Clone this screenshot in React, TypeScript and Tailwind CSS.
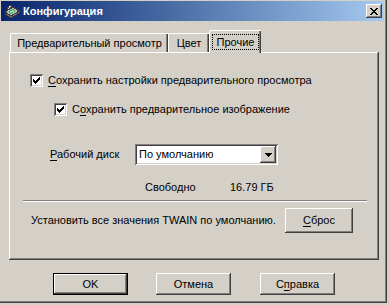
import React from 'react';

const raised =
  'bg-[#d4d0c8] shadow-[inset_-1px_-1px_#404040,inset_1px_1px_#ffffff,inset_-2px_-2px_#808080]';
const sunken =
  'shadow-[inset_1px_1px_#808080,inset_-1px_-1px_#ffffff,inset_2px_2px_#404040,inset_-2px_-2px_#d4d0c8]';

function ScannerIcon() {
  return (
    <svg width="16" height="16" viewBox="0 0 16 16" shapeRendering="crispEdges">
      <path d="M1 9 L9 4 L15 8 L7 13 Z" fill="#c0c0c0" stroke="#404040" strokeWidth="1" />
      <path d="M1 9 L1 11 L7 15 L15 10 L15 8 L7 13 Z" fill="#808080" stroke="#404040" strokeWidth="1" />
      <path d="M4 9 L9 6 L12 8 L7 11 Z" fill="#2f9e5a" />
      <path d="M5 9 L9 7 L11 8 L7 10 Z" fill="#9be39b" />
      <path d="M3 6 L6 2 L8 3 L5 7 Z" fill="#e0e0e0" stroke="#404040" strokeWidth="1" />
    </svg>
  );
}

function Check({ u, rest, pre = '' }: { u: string; rest: string; pre?: string }) {
  return (
    <div className="flex h-[13px] items-center gap-[5px]">
      <div className={`h-[13px] w-[13px] bg-white ${sunken} flex items-center justify-center`}>
        <svg width="7" height="7" viewBox="0 0 7 7" shapeRendering="crispEdges">
          <path
            d="M6 0h1v3h-1zM5 1h1v3h-1zM4 2h1v3h-1zM3 3h1v3h-1zM2 4h1v3h-1zM1 3h1v3h-1zM0 2h1v3h-1z"
            fill="#000"
          />
        </svg>
      </div>
      <span className="leading-[13px]">
        {pre}
        <u className="underline-offset-2">{u}</u>
        {rest}
      </span>
    </div>
  );
}

function Button({ children, w = 'w-[75px]', def = false }: { children: React.ReactNode; w?: string; def?: boolean }) {
  return (
    <div
      className={`${w} flex items-center justify-center ${
        def
          ? 'bg-[#d4d0c8] shadow-[inset_0_0_0_1px_#000000,inset_-2px_-2px_#404040,inset_2px_2px_#ffffff,inset_-3px_-3px_#808080]'
          : raised
      }`}
    >
      {children}
    </div>
  );
}

export default function App() {
  return (
    <div className="h-[305px] w-[390px] overflow-hidden bg-[#d4d0c8] font-['Liberation_Sans',Arial,sans-serif] text-[11px] text-black">
      <div className="-ml-[2px] -mt-[2px] flex h-[305px] w-[389px] flex-col p-[3px] shadow-[inset_-1px_-1px_#404040,inset_1px_1px_#d4d0c8,inset_-2px_-2px_#808080,inset_2px_2px_#ffffff]">
        {/* title bar */}
        <div className="flex h-[20px] items-center bg-gradient-to-r from-[#0a246a] to-[#a6caf0] pl-[3px] pr-[2px]">
          <ScannerIcon />
          <span className="ml-[3px] text-[11px] font-bold text-white">Конфигурация</span>
          <div className={`ml-auto flex h-[14px] w-[16px] items-center justify-center ${raised}`}>
            <svg width="8" height="7" viewBox="0 0 8 7" shapeRendering="crispEdges">
              <path
                d="M0 0h2v1h-2zM6 0h2v1h-2zM1 1h2v1h-2zM5 1h2v1h-2zM2 2h4v1h-4zM3 3h2v1h-2zM2 4h4v1h-4zM1 5h2v1h-2zM5 5h2v1h-2zM0 6h2v1h-2zM6 6h2v1h-2z"
                fill="#000"
              />
            </svg>
          </div>
        </div>

        {/* tabs */}
        <div className="mt-[9px] flex h-[22px] items-end pl-[9px]">
          <div className="flex h-[19px] w-[158px] items-center justify-center rounded-tl-[2px] border-l border-t border-white shadow-[inset_-1px_0_#404040,inset_-2px_0_#808080]">
            Предварительный просмотр
          </div>
          <div className="flex h-[19px] w-[41px] items-center justify-center rounded-tl-[2px] border-l border-t border-white shadow-[inset_-1px_0_#404040,inset_-2px_0_#808080]">
            Цвет
          </div>
          <div className="relative z-10 -mb-[1px] flex h-[23px] w-[52px] items-start justify-center rounded-tl-[2px] border-l border-t border-white bg-[#d4d0c8] pt-[3px] shadow-[inset_-1px_0_#404040,inset_-2px_0_#808080]">
            <span className="flex h-[16px] w-[47px] items-center justify-center border border-dotted border-black">Прочие</span>
          </div>
        </div>

        {/* panel */}
        <div className={`ml-[8px] h-[208px] w-[370px] ${raised} pl-[21px] pt-[22px]`}>
          <Check u="С" rest="охранить настройки предварительного просмотра" />
          <div className="ml-[24px] mt-[16px]">
            <Check pre="С" u="о" rest="хранить предварительное изображение" />
          </div>

          <div className="mt-[28px] flex h-[21px] items-center">
            <span className="ml-[20px] w-[85px]">
              <u className="underline-offset-2">Р</u>абочий диск
            </span>
            <div className={`flex h-[21px] w-[143px] items-center bg-white p-[2px] ${sunken}`}>
              <span className="flex-1 pl-[2px]">По умолчанию</span>
              <div className={`flex h-[17px] w-[16px] items-center justify-center ${raised}`}>
                <svg width="7" height="4" viewBox="0 0 7 4" shapeRendering="crispEdges">
                  <path d="M0 0h7v1h-7zM1 1h5v1h-5zM2 2h3v1h-3zM3 3h1v1h-1z" fill="#000" />
                </svg>
              </div>
            </div>
          </div>

          <div className="ml-[115px] mt-[16px] flex h-[13px] items-center leading-[13px]">
            <span className="w-[85px]">Свободно</span>
            <span>16.79 ГБ</span>
          </div>

          <div className="-ml-[7px] mt-[6px] h-[2px] w-[344px] border-t border-b border-t-[#808080] border-b-white" />

          <div className="mt-[6px] flex h-[25px] items-center">
            <span className="ml-[1px] w-[254px]">Установить все значения TWAIN по умолчанию.</span>
            <Button w="w-[68px] h-[25px]">
              <span>
                <u className="underline-offset-2">С</u>брос
              </span>
            </Button>
          </div>
        </div>

        {/* dialog buttons */}
        <div className="mt-[13px] flex h-[22px] pl-[52px]">
          <Button def>OK</Button>
          <div className="w-[28px]" />
          <Button>Отмена</Button>
          <div className="w-[29px]" />
          <Button>
            <span>
              С<u className="underline-offset-2">п</u>равка
            </span>
          </Button>
        </div>
      </div>
    </div>
  );
}
